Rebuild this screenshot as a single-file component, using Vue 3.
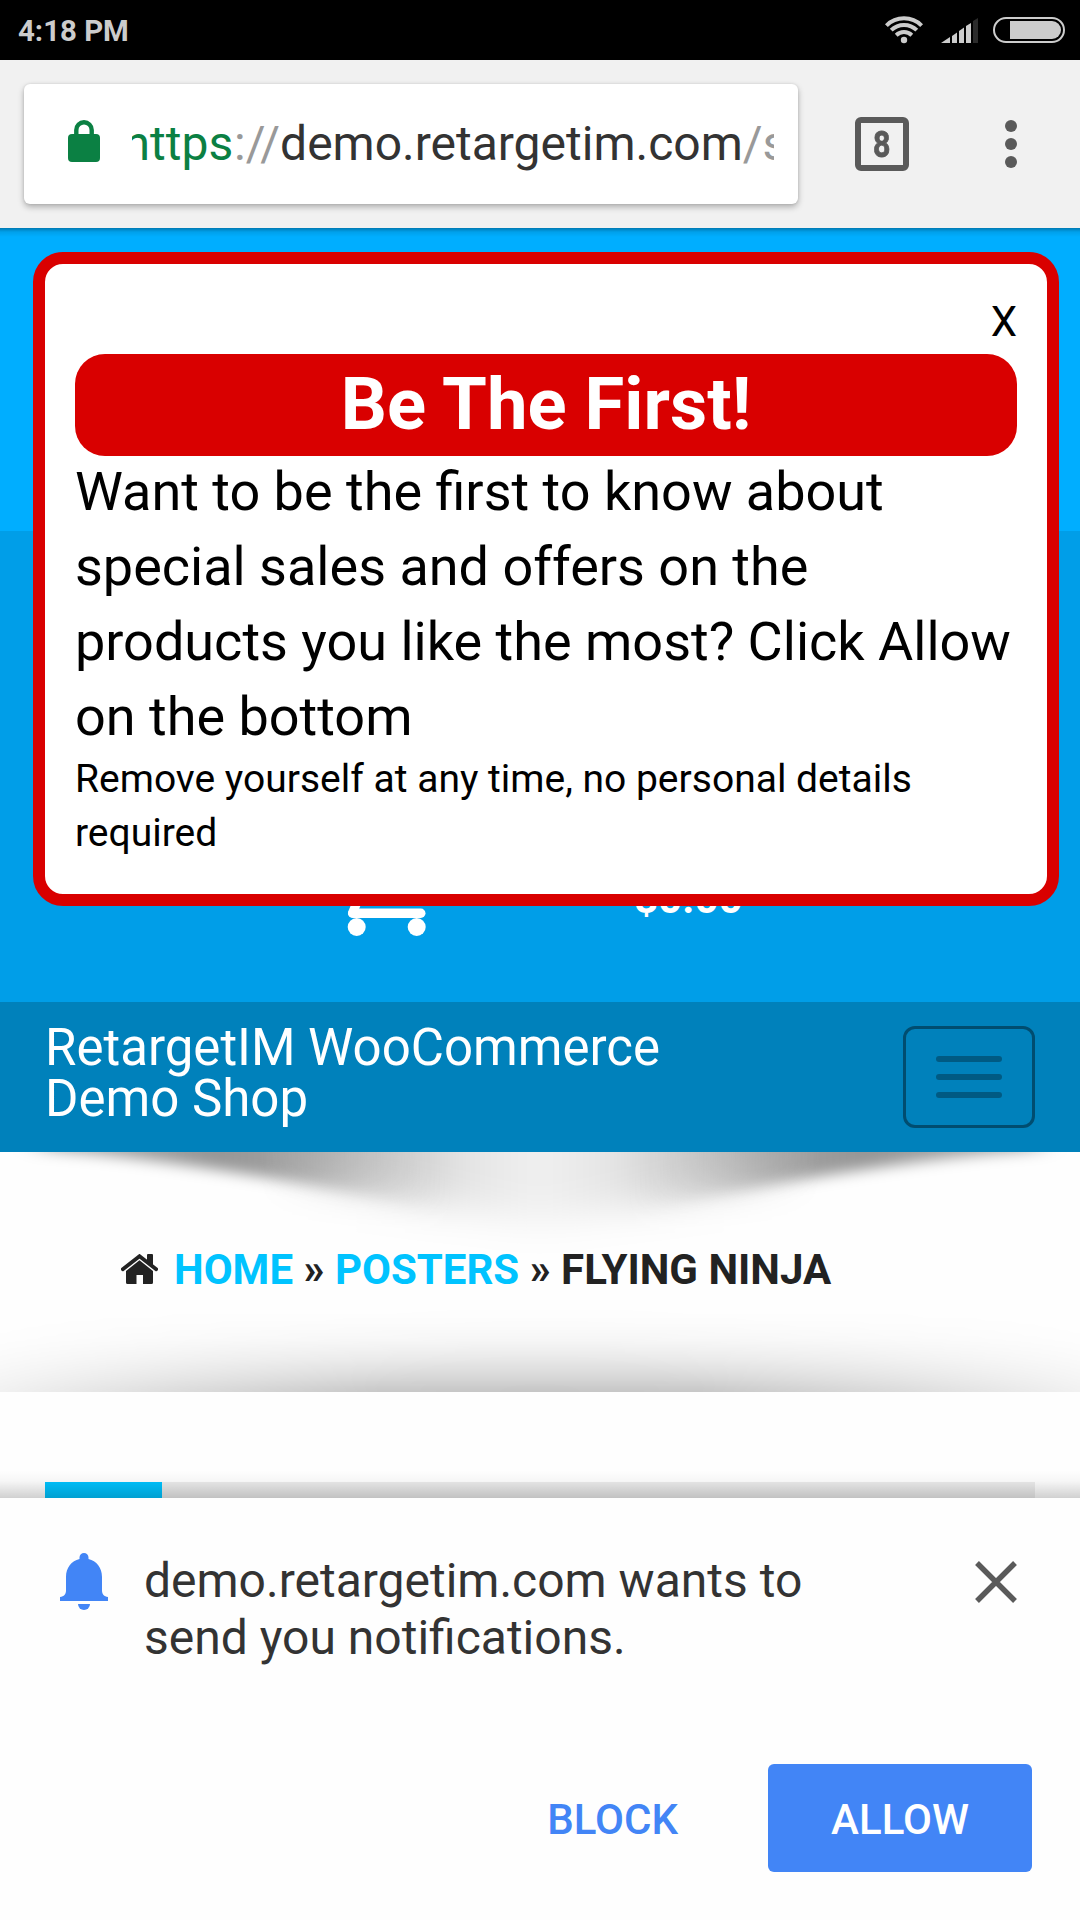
<script setup>
const signal = [
  'M941 43 L950 37 V43Z',
  'M952 43 V36 L957 32.5 V43Z',
  'M959 43 V31 L964 27.5 V43Z',
  'M966 43 V26 L971 23 V43Z',
]
</script>

<template>
  <div class="screen">
    <header class="status">
      <span class="time">4:18 PM</span>
      <svg class="status-icons" width="200" height="60" viewBox="880 0 200 60">
        <g fill="none" stroke="#ccc" stroke-width="4">
          <path d="M886.4 25.6 A25 25 0 0 1 921.6 25.6" />
          <path d="M891.2 30.2 A18.2 18.2 0 0 1 916.8 30.2" />
          <path d="M896.2 35.2 A11.4 11.4 0 0 1 911.8 35.2" />
        </g>
        <circle cx="904" cy="40" r="3.2" fill="#ccc" />
        <path v-for="d in signal" :key="d" :d="d" fill="#ccc" />
        <path d="M973 43 V21 L978 18 V43Z" fill="#2b2b2b" />
        <rect x="994" y="18" width="70" height="24" rx="12" fill="none" stroke="#ccc" stroke-width="2" />
        <path d="M1010 21 H1052 A9 9 0 0 1 1052 39 H1010Z" fill="#ccc" />
      </svg>
    </header>

    <div class="toolbar">
      <div class="omnibox">
        <svg class="lock" width="32" height="42" viewBox="0 0 32 42">
          <rect x="0" y="14" width="32" height="28" rx="4" fill="#0b8043" />
          <path d="M8.3 16 V10 A7.7 7.7 0 0 1 23.7 10 V16" fill="none" stroke="#0b8043" stroke-width="4.4" />
        </svg>
        <div class="url"><span class="url-text"><span class="scheme">https</span><span class="dim">://</span>demo.retargetim.com<span class="dim">/s</span></span></div>
      </div>
      <div class="tabs-count"><span>8</span></div>
      <svg class="dots" width="12" height="48" viewBox="0 0 12 48" fill="#5a5a5a">
        <circle cx="6" cy="6" r="6" /><circle cx="6" cy="24" r="6" /><circle cx="6" cy="42" r="6" />
      </svg>
    </div>

    <main class="page">
      <div class="hero"></div>
      <div class="cart-bar">
        <svg class="cart" width="90" height="80" viewBox="0 0 90 80">
          <path d="M2 10 H14 L24 50 M20 22 H82 L76 50 H25" fill="none" stroke="#fff" stroke-width="9.5" stroke-linecap="round" stroke-linejoin="round" />
          <path d="M16.5 68 L24 50" stroke="#fff" stroke-width="9" stroke-linecap="round" />
          <rect x="12" y="63.5" width="77.5" height="9.5" rx="4.7" fill="#fff" />
          <circle cx="20.7" cy="82" r="9" fill="#fff" />
          <circle cx="80.7" cy="82" r="9" fill="#fff" />
        </svg>
        <span class="total">$0.00</span>
      </div>

      <nav class="navbar">
        <div class="brand">RetargetIM WooCommerce<br>Demo Shop</div>
        <div class="toggle"><i></i><i></i><i></i></div>
      </nav>

      <section class="crumb-area">
        <svg class="swoosh" width="1080" height="150" viewBox="0 0 1080 150">
          <defs>
            <linearGradient id="sh" gradientUnits="userSpaceOnUse" x1="0" y1="0" x2="1080" y2="0">
              <stop offset=".03" stop-color="#000" stop-opacity=".32" />
              <stop offset=".2" stop-color="#000" stop-opacity=".41" />
              <stop offset=".29" stop-color="#000" stop-opacity=".35" />
              <stop offset=".36" stop-color="#000" stop-opacity=".22" />
              <stop offset=".43" stop-color="#000" stop-opacity=".1" />
              <stop offset=".5" stop-color="#000" stop-opacity=".055" />
              <stop offset=".57" stop-color="#000" stop-opacity=".1" />
              <stop offset=".64" stop-color="#000" stop-opacity=".22" />
              <stop offset=".71" stop-color="#000" stop-opacity=".35" />
              <stop offset=".8" stop-color="#000" stop-opacity=".41" />
              <stop offset=".97" stop-color="#000" stop-opacity=".32" />
            </linearGradient>
            <filter id="b1" filterUnits="userSpaceOnUse" x="-50" y="-80" width="1180" height="230" color-interpolation-filters="sRGB"><feGaussianBlur stdDeviation="14 7" /></filter>
            <filter id="b2" filterUnits="userSpaceOnUse" x="-50" y="-100" width="1180" height="270" color-interpolation-filters="sRGB"><feGaussianBlur stdDeviation="16 19" /></filter>
            <linearGradient id="mid" x1="0" y1="0" x2="1080" y2="0" gradientUnits="userSpaceOnUse">
              <stop offset=".24" stop-color="#fff" stop-opacity="0" />
              <stop offset=".42" stop-color="#fff" />
              <stop offset=".58" stop-color="#fff" />
              <stop offset=".76" stop-color="#fff" stop-opacity="0" />
            </linearGradient>
            <linearGradient id="side" x1="0" y1="0" x2="1080" y2="0" gradientUnits="userSpaceOnUse">
              <stop offset=".24" stop-color="#fff" />
              <stop offset=".42" stop-color="#fff" stop-opacity="0" />
              <stop offset=".58" stop-color="#fff" stop-opacity="0" />
              <stop offset=".76" stop-color="#fff" />
            </linearGradient>
            <mask id="mm" maskUnits="userSpaceOnUse" x="0" y="0" width="1080" height="150"><rect width="1080" height="150" fill="url(#mid)" /></mask>
            <mask id="ms" maskUnits="userSpaceOnUse" x="0" y="0" width="1080" height="150"><rect width="1080" height="150" fill="url(#side)" /></mask>
          </defs>
          <g mask="url(#ms)"><path d="M40 -50 V-2 C200 8 330 38 540 74 C750 38 880 8 1040 -2 V-50Z" fill="url(#sh)" filter="url(#b1)" /></g>
          <g mask="url(#mm)"><path d="M40 -80 V-2 C200 8 330 34 540 70 C750 34 880 8 1040 -2 V-80Z" fill="url(#sh)" filter="url(#b2)" /></g>
        </svg>
        <div class="crumbs">
          <svg width="37" height="30" viewBox="0 0 37 30">
            <path d="M1.8 15.2 L18.5 2.2 L35.2 15.2" fill="none" stroke="#222" stroke-width="3.8" stroke-linecap="round" />
            <path d="M26 1 Q26 0 27 0 H31 Q32 0 32 1 V12 L26 7.5Z" fill="#222" />
            <path d="M5 17 L18.5 6.3 L32 17 V28.5 Q32 30 30.5 30 H22 V21 H15.5 V30 H6.5 Q5 30 5 28.5Z" fill="#222" />
          </svg>
          <span class="trail"><a>HOME</a> » <a>POSTERS</a> » FLYING NINJA</span>
        </div>
      </section>
      <div class="tabline"><div class="tab-on"></div><div class="tab-off"></div></div>
      <div class="bar-shadow"></div>
    </main>

    <section class="infobar">
      <div class="info-row">
        <svg width="48" height="57" viewBox="0 0 48 57" fill="#4285f6">
          <path d="M0 48 V44 C4 43.5 6 41 6 37.5 V24 C6 14.5 11.5 8 19.5 6 V4.5 A4.5 4.5 0 0 1 28.5 4.5 V6 C36.5 8 42 14.5 42 24 V37.5 C42 41 44 43.5 48 44 V48Z" />
          <path d="M18 51 H30 A6 6 0 0 1 18 51Z" />
        </svg>
        <p>demo.retargetim.com wants to<br>send you notifications.</p>
        <svg class="close" width="42" height="42" viewBox="0 0 42 42">
          <path d="M2 2 L40 40 M40 2 L2 40" stroke="#5a5a5a" stroke-width="5.4" />
        </svg>
      </div>
      <div class="actions">
        <span class="block">BLOCK</span>
        <span class="allow">ALLOW</span>
      </div>
    </section>

    <div class="modal">
      <div class="x">X</div>
      <h1>Be The First!</h1>
      <p class="big">Want to be the first to know about<br>special sales and offers on the<br>products you like the most? Click Allow<br>on the bottom</p>
      <p class="small">Remove yourself at any time, no personal details<br>required</p>
    </div>
  </div>
</template>

<style>
body { margin: 0; background: #fff; }
</style>

<style scoped>
.screen { position: relative; width: 1080px; height: 1920px; overflow: hidden; background: #fefefe; font-family: Roboto, sans-serif; display: flex; flex-direction: column; }
svg { display: block; flex: none; }
p, h1 { margin: 0; }
.status { height: 60px; flex: none; background: #000; display: flex; justify-content: space-between; }
.time { padding-left: 18px; font-size: 29.4px; font-weight: 700; line-height: 62px; color: #ccc; }
.toolbar { height: 168px; flex: none; box-sizing: border-box; background: #f1f1f1; display: flex; align-items: center; padding-left: 24px; }
.omnibox { width: 774px; height: 120px; background: #fff; border-radius: 6px; box-shadow: 0 3px 6px rgba(0,0,0,.28), 0 0 3px rgba(0,0,0,.1); display: flex; align-items: center; }
.lock { margin: 0 32px 6px 44px; }
.url { width: 642px; overflow: hidden; display: flex; height: 60px; }
.url-text { margin-left: -8.4px; font-size: 48px; line-height: 60px; color: #333; white-space: nowrap; }
.scheme { color: #0b8043; margin-right: .9px; }
.dim { color: #999; }
.tabs-count { width: 54px; height: 54px; box-sizing: border-box; border: 6px solid #5a5a5a; border-radius: 6px; margin-left: 57px; display: flex; align-items: center; justify-content: center; font-size: 37px; font-weight: 700; color: #5a5a5a; }
.tabs-count span { transform: scaleX(.82); -webkit-text-stroke: .8px #5a5a5a; }
.dots { margin-left: 96px; }
.page { height: 1270px; flex: none; position: relative; overflow: hidden; background: #fefefe; }
.hero { height: 303px; background: linear-gradient(rgba(0,0,0,.3), rgba(0,0,0,.08) 4px, rgba(0,0,0,0) 9px), #00aeff; }
.cart-bar { height: 471px; box-sizing: border-box; background: #009ee8; padding: 314px 0 0 336px; display: flex; }
.cart { overflow: visible; }
.total { margin-left: 208px; padding-top: 24px; font-size: 42px; font-weight: 700; line-height: 60px; color: #fff; }
.navbar { height: 150px; box-sizing: border-box; background: #0081bb; display: flex; justify-content: space-between; padding: 20px 45px 0; }
.brand { color: #fff; font-size: 51px; line-height: 51px; }
.toggle { width: 132px; height: 102px; box-sizing: border-box; margin-top: 4px; border: 3px solid #004d70; border-radius: 12px; display: flex; flex-direction: column; align-items: center; justify-content: center; gap: 12px; }
.toggle i { width: 66px; height: 6px; border-radius: 3px; background: #005a83; }
.crumb-area { position: relative; height: 240px; }
.crumb-area::after { content: ""; position: absolute; left: 0; right: 0; bottom: 0; height: 84px; background: linear-gradient(to top, rgba(0,0,0,.225), rgba(0,0,0,.145) 17px, rgba(0,0,0,.09) 33px, rgba(0,0,0,.04) 52px, rgba(0,0,0,.01) 72px, rgba(0,0,0,0)); -webkit-mask-image: radial-gradient(ellipse 640px 130px at 50% 100%, #000, rgba(0,0,0,.96) 25%, rgba(0,0,0,.6) 57%, rgba(0,0,0,.22) 85%, transparent); mask-image: radial-gradient(ellipse 640px 130px at 50% 100%, #000, rgba(0,0,0,.96) 25%, rgba(0,0,0,.6) 57%, rgba(0,0,0,.22) 85%, transparent); }
.swoosh { position: absolute; left: 0; top: 0; }
.crumbs { position: relative; display: flex; padding: 93px 0 0 121px; color: #222; font-size: 42px; font-weight: 700; line-height: 50px; }
.crumbs svg { margin: 9px 16px 0 0; }
.crumbs a { color: #00c3ff; }
.tabline { margin: 90px 45px 0; height: 16px; display: flex; }
.tab-on { width: 117px; background: #00c3ff; }
.tab-off { flex: 1; background: #ececec; }
.bar-shadow { position: absolute; left: 0; right: 0; bottom: 0; height: 28px; background: linear-gradient(rgba(0,0,0,0), rgba(0,0,0,.03) 40%, rgba(0,0,0,.18)); }
.infobar { flex: 1; background: #fefefe; }
.info-row { display: flex; padding: 55px 63px 0 60px; }
.info-row p { margin: -1px 0 0 36px; flex: 1; font-size: 48px; line-height: 57px; color: #333; }
.close { margin-top: 8px; }
.actions { display: flex; justify-content: flex-end; padding: 98px 48px 0 0; font-size: 42px; font-weight: 500; line-height: 112px; }
.block { color: #4285f6; margin-right: 90px; }
.allow { width: 264px; height: 108px; border-radius: 6px; background: #4285f6; color: #fff; text-align: center; }
.modal { position: absolute; left: 33px; top: 252px; width: 1026px; height: 654px; box-sizing: border-box; border: 12px solid #d90000; border-radius: 30px; background: #fff; padding: 28px 30px 0; color: #000; }
.x { text-align: right; font-size: 42px; line-height: 60px; }
h1 { margin-top: 2px; height: 102px; border-radius: 30px; background: #d90000; color: #fff; text-align: center; font-size: 72.4px; line-height: 102px; font-weight: 700; }
.big { margin-top: -2px; font-size: 54px; line-height: 75px; white-space: nowrap; }
.small { margin-top: -2px; font-size: 39px; line-height: 54px; white-space: nowrap; }
</style>
